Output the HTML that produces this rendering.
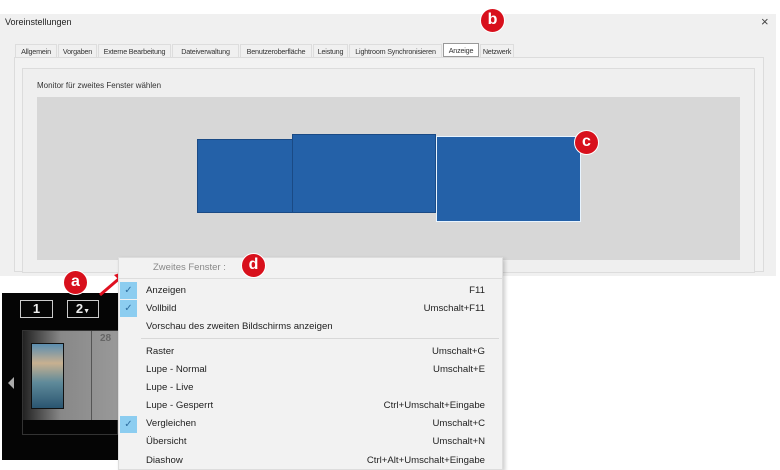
<!DOCTYPE html>
<html><head><meta charset="utf-8"><style>
*{margin:0;padding:0;box-sizing:border-box}
body{width:780px;height:470px;background:#fff;position:relative;overflow:hidden;font-family:"Liberation Sans",sans-serif;color:#222}
.a{position:absolute}
.badge{position:absolute;width:25px;height:25px;border-radius:50%;background:#d8101c;border:1.5px solid #fff;color:#fff;font-weight:bold;font-size:16px;text-align:center;line-height:22px}
.tab{position:absolute;top:44px;height:14px;font-size:7.2px;letter-spacing:-0.2px;line-height:13px;color:#333;border:1px solid #ddd;border-bottom:none;text-align:center;white-space:nowrap;overflow:hidden}
.mi{position:absolute;left:146px;font-size:9.6px;color:#222}
.sc{position:absolute;right:295px;font-size:9.6px;color:#222;text-align:right}
.ck{position:absolute;left:120px;width:17px;height:17px;background:#8ccdf0;color:#2f6fa0;font-size:10px;text-align:center;line-height:17px}
</style></head><body>
<div class="a" style="left:0;top:14px;width:776px;height:262px;background:#f0f0f0"></div>
<div class="a" style="left:5px;top:17px;font-size:9px">Voreinstellungen</div>
<div class="a" style="left:761px;top:14px;font-size:13px;color:#444">×</div>
<div class="a" style="left:14px;top:57px;width:750px;height:215px;border:1px solid #dcdcdc;background:#f2f2f2"></div>
<div class="a" style="left:22px;top:68px;width:733px;height:205px;border:1px solid #dcdcdc;background:#efefef"></div>
<div class="tab" style="left:15px;width:42px">Allgemein</div>
<div class="tab" style="left:58px;width:39px">Vorgaben</div>
<div class="tab" style="left:98px;width:73px">Externe Bearbeitung</div>
<div class="tab" style="left:172px;width:67px">Dateiverwaltung</div>
<div class="tab" style="left:240px;width:72px">Benutzeroberfläche</div>
<div class="tab" style="left:313px;width:35px">Leistung</div>
<div class="tab" style="left:349px;width:93px">Lightroom Synchronisieren</div>
<div class="tab" style="left:443px;top:43px;width:36px;border:1px solid #999;background:#fff">Anzeige</div>
<div class="tab" style="left:480px;width:34px">Netzwerk</div>
<div class="a" style="left:37px;top:81px;font-size:8px;color:#333">Monitor für zweites Fenster wählen</div>
<div class="a" style="left:37px;top:97px;width:703px;height:163px;background:#d7d7d7"></div>
<div class="a" style="left:197px;top:139px;width:96px;height:74px;background:#2461a8;border:1px solid #1a4a85"></div>
<div class="a" style="left:292px;top:134px;width:144px;height:79px;background:#2461a8;border:1px solid #1a4a85"></div>
<div class="a" style="left:436px;top:136px;width:145px;height:86px;background:#2461a8;border:1.5px solid #e8f4ff"></div>
<div class="badge" style="left:480px;top:8px">b</div>
<div class="badge" style="left:574px;top:130px">c</div>
<div class="a" style="left:2px;top:293px;width:116px;height:167px;background:#050505"></div>
<div class="a" style="left:20px;top:300px;width:33px;height:18px;border:1.5px solid #ccc;color:#eee;font-size:13px;font-weight:bold;text-align:center;line-height:15px">1</div>
<div class="a" style="left:67px;top:300px;width:32px;height:18px;border:1.5px solid #ccc;color:#eee;font-size:13px;font-weight:bold;text-align:center;line-height:15px">2<span style="font-size:7px">▼</span></div>
<div class="a" style="left:22px;top:330px;width:96px;height:105px;border:1px solid #333"></div>
<div class="a" style="left:23px;top:331px;width:95px;height:89px;background:linear-gradient(90deg,#222,#888 40%,#999)"></div>
<div class="a" style="left:91px;top:331px;width:1px;height:89px;background:#555"></div>
<div class="a" style="left:100px;top:333px;font-size:10px;font-weight:bold;color:#666">28</div>
<div class="a" style="left:31px;top:343px;width:33px;height:66px;background:linear-gradient(180deg,#5a8db0,#c8b090 30%,#5f8a9a 60%,#2a5570);border:1px solid #111"></div>
<div class="a" style="left:8px;top:377px;width:0;height:0;border-top:6px solid transparent;border-bottom:6px solid transparent;border-right:6px solid #aaa"></div>
<svg class="a" style="left:95px;top:265px" width="40" height="40"><path d="M5 30 L26 12" stroke="#e01020" stroke-width="3"/><path d="M33 5 L19 10 L27 18Z" fill="#e01020"/></svg>
<div class="badge" style="left:63px;top:270px">a</div>
<div class="a" style="left:118px;top:257px;width:385px;height:213px;background:#f2f2f2;border:1px solid #ddd;box-shadow:2px 2px 4px rgba(0,0,0,.2)"></div>
<div class="a" style="left:153px;top:262px;font-size:9.5px;color:#888">Zweites Fenster :</div>
<div class="a" style="left:118px;top:278px;width:385px;height:1px;background:#ddd"></div>
<div class="badge" style="left:241px;top:253px">d</div>
<div class="ck" style="top:282px">✓</div>
<div class="ck" style="top:300px">✓</div>
<div class="ck" style="top:416px">✓</div>
<div class="mi" style="top:285px">Anzeigen</div><div class="sc" style="top:285px">F11</div>
<div class="mi" style="top:303px">Vollbild</div><div class="sc" style="top:303px">Umschalt+F11</div>
<div class="mi" style="top:321px">Vorschau des zweiten Bildschirms anzeigen</div>
<div class="a" style="left:141px;top:338px;width:358px;height:1px;background:#d8d8d8"></div>
<div class="mi" style="top:346px">Raster</div><div class="sc" style="top:346px">Umschalt+G</div>
<div class="mi" style="top:364px">Lupe - Normal</div><div class="sc" style="top:364px">Umschalt+E</div>
<div class="mi" style="top:382px">Lupe - Live</div>
<div class="mi" style="top:400px">Lupe - Gesperrt</div><div class="sc" style="top:400px">Ctrl+Umschalt+Eingabe</div>
<div class="mi" style="top:418px">Vergleichen</div><div class="sc" style="top:418px">Umschalt+C</div>
<div class="mi" style="top:436px">Übersicht</div><div class="sc" style="top:436px">Umschalt+N</div>
<div class="mi" style="top:455px">Diashow</div><div class="sc" style="top:455px">Ctrl+Alt+Umschalt+Eingabe</div>
</body></html>
